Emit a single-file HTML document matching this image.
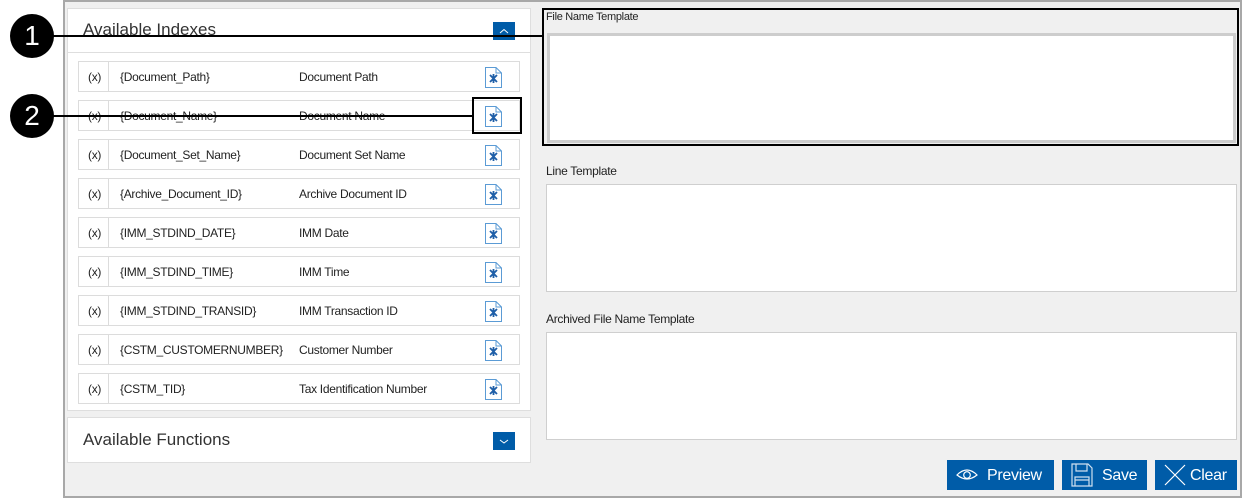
<!DOCTYPE html>
<html><head><meta charset="utf-8"><style>
*{box-sizing:border-box;margin:0;padding:0}
body{width:1244px;height:498px;background:#fff;position:relative;overflow:hidden;font-family:"Liberation Sans",sans-serif;color:#222}
.a{position:absolute}
.frame{left:63px;top:0;width:1179px;height:498px;background:#f0f0f0;border:2px solid #a8a8a8}
.panel{background:#fff;border:1px solid #dedede}
.row{left:78px;width:442px;height:31px;border:1px solid #dcdcdc;background:#fff;font-size:12px;letter-spacing:-0.3px}
.row span{position:absolute;top:8px}
.row .x{left:9px}
.row .sep{left:29px;top:0;width:1px;height:29px;background:#dcdcdc}
.row .n{left:41px}
.row .d{left:220px}
.row svg{position:absolute;left:406px;top:5px}
.lbl{font-size:12px;color:#222;letter-spacing:-0.3px}
.ta{background:#fff;border:1px solid #cfcfcf}
.btn{background:#005ca8;color:#fff;font-size:16px;height:30px;top:460px;letter-spacing:-0.3px}
.circ{width:44px;height:44px;border-radius:50%;background:#000;color:#fff;font-size:28px;text-align:center;line-height:44px}
</style></head><body>
<div class="a frame"></div>
<div class="a panel" style="left:67px;top:8px;width:464px;height:403px"></div>
<div class="a" style="left:67px;top:52px;width:464px;height:1px;background:#dedede"></div>
<div class="a" style="left:83px;top:20px;font-size:17px;color:#333">Available Indexes</div>
<div class="a" style="left:493px;top:22px;width:22px;height:18px;background:#005ca8"><svg width="22" height="18"><path d="M7 11 L11 7.5 L15 11" fill="none" stroke="#fff" stroke-width="1"/></svg></div>

<div class="a row" style="top:61px"><span class="x">(x)</span><span class="sep"></span><span class="n">{Document_Path}</span><span class="d">Document Path</span><svg width="17" height="21"><path d="M0.5 0.5H11L16.5 6V20.5H0.5Z M11 0.5V6H16.5" fill="#fff" stroke="#5b9bd5"/><path d="M5 8L12 15M12 8L5 15M8.5 7V16" stroke="#1f5fa8" stroke-width="1.8"/></svg></div>
<div class="a row" style="top:100px"><span class="x">(x)</span><span class="sep"></span><span class="n">{Document_Name}</span><span class="d">Document Name</span><svg width="17" height="21"><path d="M0.5 0.5H11L16.5 6V20.5H0.5Z M11 0.5V6H16.5" fill="#fff" stroke="#5b9bd5"/><path d="M5 8L12 15M12 8L5 15M8.5 7V16" stroke="#1f5fa8" stroke-width="1.8"/></svg></div>
<div class="a row" style="top:139px"><span class="x">(x)</span><span class="sep"></span><span class="n">{Document_Set_Name}</span><span class="d">Document Set Name</span><svg width="17" height="21"><path d="M0.5 0.5H11L16.5 6V20.5H0.5Z M11 0.5V6H16.5" fill="#fff" stroke="#5b9bd5"/><path d="M5 8L12 15M12 8L5 15M8.5 7V16" stroke="#1f5fa8" stroke-width="1.8"/></svg></div>
<div class="a row" style="top:178px"><span class="x">(x)</span><span class="sep"></span><span class="n">{Archive_Document_ID}</span><span class="d">Archive Document ID</span><svg width="17" height="21"><path d="M0.5 0.5H11L16.5 6V20.5H0.5Z M11 0.5V6H16.5" fill="#fff" stroke="#5b9bd5"/><path d="M5 8L12 15M12 8L5 15M8.5 7V16" stroke="#1f5fa8" stroke-width="1.8"/></svg></div>
<div class="a row" style="top:217px"><span class="x">(x)</span><span class="sep"></span><span class="n">{IMM_STDIND_DATE}</span><span class="d">IMM Date</span><svg width="17" height="21"><path d="M0.5 0.5H11L16.5 6V20.5H0.5Z M11 0.5V6H16.5" fill="#fff" stroke="#5b9bd5"/><path d="M5 8L12 15M12 8L5 15M8.5 7V16" stroke="#1f5fa8" stroke-width="1.8"/></svg></div>
<div class="a row" style="top:256px"><span class="x">(x)</span><span class="sep"></span><span class="n">{IMM_STDIND_TIME}</span><span class="d">IMM Time</span><svg width="17" height="21"><path d="M0.5 0.5H11L16.5 6V20.5H0.5Z M11 0.5V6H16.5" fill="#fff" stroke="#5b9bd5"/><path d="M5 8L12 15M12 8L5 15M8.5 7V16" stroke="#1f5fa8" stroke-width="1.8"/></svg></div>
<div class="a row" style="top:295px"><span class="x">(x)</span><span class="sep"></span><span class="n">{IMM_STDIND_TRANSID}</span><span class="d">IMM Transaction ID</span><svg width="17" height="21"><path d="M0.5 0.5H11L16.5 6V20.5H0.5Z M11 0.5V6H16.5" fill="#fff" stroke="#5b9bd5"/><path d="M5 8L12 15M12 8L5 15M8.5 7V16" stroke="#1f5fa8" stroke-width="1.8"/></svg></div>
<div class="a row" style="top:334px"><span class="x">(x)</span><span class="sep"></span><span class="n">{CSTM_CUSTOMERNUMBER}</span><span class="d">Customer Number</span><svg width="17" height="21"><path d="M0.5 0.5H11L16.5 6V20.5H0.5Z M11 0.5V6H16.5" fill="#fff" stroke="#5b9bd5"/><path d="M5 8L12 15M12 8L5 15M8.5 7V16" stroke="#1f5fa8" stroke-width="1.8"/></svg></div>
<div class="a row" style="top:373px"><span class="x">(x)</span><span class="sep"></span><span class="n">{CSTM_TID}</span><span class="d">Tax Identification Number</span><svg width="17" height="21"><path d="M0.5 0.5H11L16.5 6V20.5H0.5Z M11 0.5V6H16.5" fill="#fff" stroke="#5b9bd5"/><path d="M5 8L12 15M12 8L5 15M8.5 7V16" stroke="#1f5fa8" stroke-width="1.8"/></svg></div>

<div class="a panel" style="left:67px;top:417px;width:464px;height:46px"></div>
<div class="a" style="left:83px;top:430px;font-size:17px;color:#333">Available Functions</div>
<div class="a" style="left:493px;top:432px;width:22px;height:18px;background:#005ca8"><svg width="22" height="18"><path d="M7 8 L11 11 L15 8" fill="none" stroke="#fff" stroke-width="1"/></svg></div>

<div class="a lbl" style="left:546px;top:11px;font-size:11px">File Name Template</div>
<div class="a ta" style="left:547px;top:33px;width:689px;height:110px;border:3px solid #cdcdcd"></div>
<div class="a" style="left:542px;top:8px;width:697px;height:138px;border:2px solid #000"></div>
<div class="a lbl" style="left:546px;top:164px">Line Template</div>
<div class="a ta" style="left:546px;top:184px;width:691px;height:108px"></div>
<div class="a lbl" style="left:546px;top:312px">Archived File Name Template</div>
<div class="a ta" style="left:546px;top:332px;width:691px;height:108px"></div>

<div class="a btn" style="left:947px;width:107px"><svg class="a" style="left:9px;top:8px" width="22" height="14"><path d="M1 7 Q11 -3 21 7 Q11 15 1 7Z" fill="none" stroke="#fff" stroke-width="1.2"/><circle cx="11" cy="7" r="3.3" fill="none" stroke="#fff" stroke-width="1.2"/></svg><span class="a" style="left:40px;top:7px">Preview</span></div>
<div class="a btn" style="left:1062px;width:85px"><svg class="a" style="left:9px;top:3px" width="22" height="24"><path d="M1 1H17L21 5V23H1Z M5 1V8H16V1 M4 23V14H18V23 M4 17H18" fill="none" stroke="#cfe0f0" stroke-width="1.2"/></svg><span class="a" style="left:40px;top:7px">Save</span></div>
<div class="a btn" style="left:1155px;width:82px"><svg class="a" style="left:9px;top:4px" width="22" height="22"><path d="M1 1L21 21M21 1L1 21" stroke="#fff" stroke-width="1.2"/></svg><span class="a" style="left:35px;top:7px">Clear</span></div>

<div class="a" style="left:50px;top:35px;width:492px;height:2px;background:#000"></div>
<div class="a circ" style="left:10px;top:14px">1</div>
<div class="a" style="left:50px;top:115px;width:423px;height:2px;background:#000"></div>
<div class="a" style="left:472px;top:97px;width:50px;height:37px;border:2px solid #000"></div>
<div class="a circ" style="left:10px;top:94px">2</div>
</body></html>
